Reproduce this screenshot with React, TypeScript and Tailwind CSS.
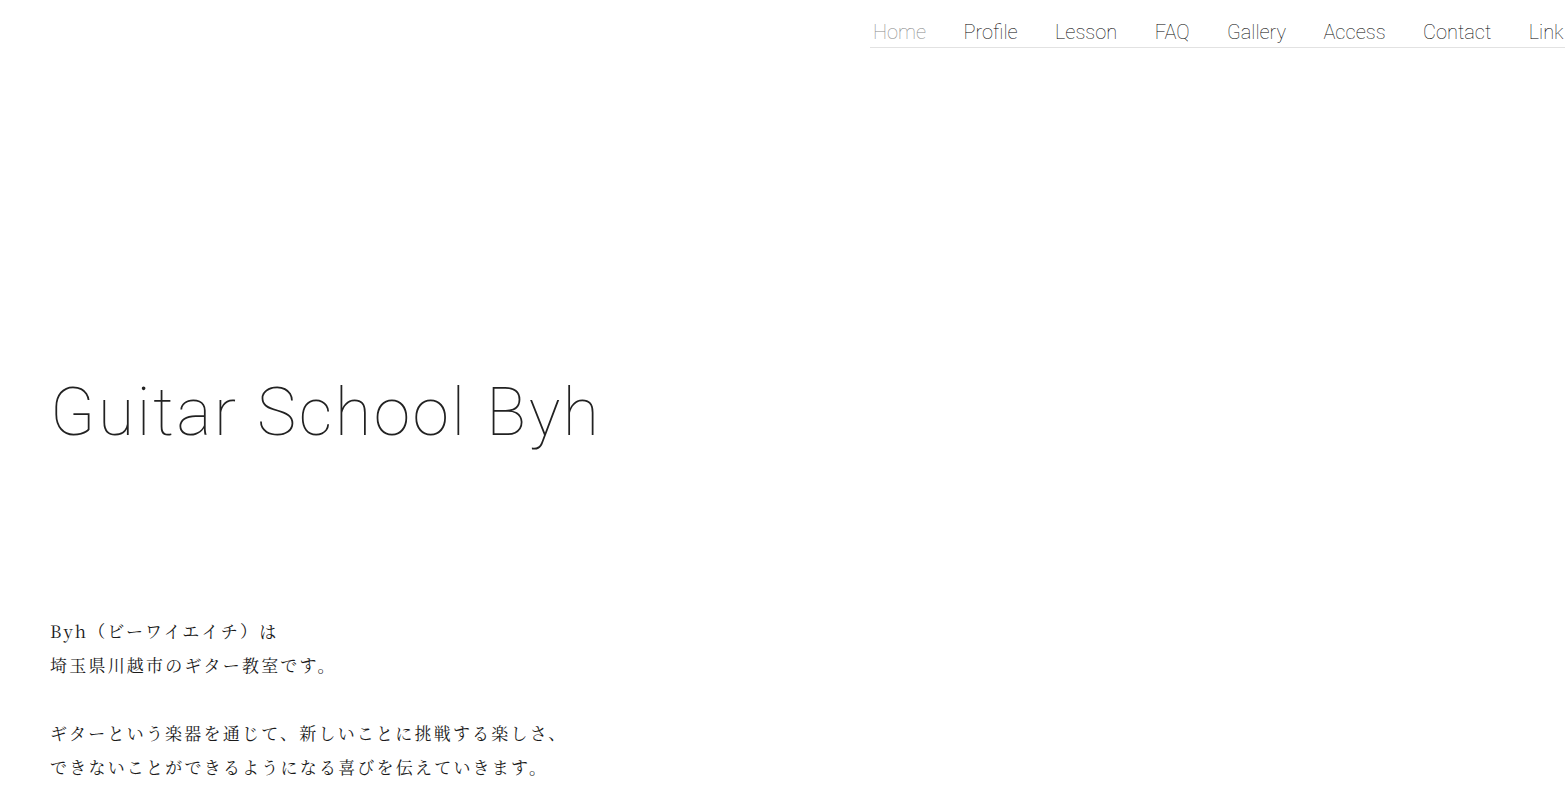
import React from "react";

const navItems = ["Home", "Profile", "Lesson", "FAQ", "Gallery", "Access", "Contact", "Link"];

export default function App() {
  return (
    <div className="w-[1565px] h-[801px] overflow-hidden bg-white text-[#222]" style={{ fontFamily: "Roboto, 'Noto Sans CJK JP', sans-serif" }}>
      <header className="pl-[870px]">
        <nav className="w-[760px] border-b border-[#e2e2e2] pt-[20px] pb-[2px]">
          <ul className="flex gap-[37.4px] pl-[3px] whitespace-nowrap">
            {navItems.map((n, i) => (
              <li
                key={n}
                className={`text-[20px] leading-[25px] font-thin ${i === 0 ? "text-[#888]" : "text-black"}`}
              >
                {n}
              </li>
            ))}
          </ul>
        </nav>
      </header>
      <main className="pl-[50px]">
        <h1 className="mt-[325px] text-[66px] leading-[80px] font-thin tracking-[0.04em] text-[#222]">Guitar School Byh</h1>
        <div
          className="mt-[161px] text-[17px] leading-[34px] tracking-[0.13em] text-[#1a1a1a]"
          style={{ fontFamily: "'Noto Serif CJK JP', 'Noto Sans CJK JP', serif" }}
        >
          <p>Byh（ビーワイエイチ）は</p>
          <p>埼玉県川越市のギター教室です。</p>
          <p className="mt-[34px]">ギターという楽器を通じて、新しいことに挑戦する楽しさ、</p>
          <p>できないことができるようになる喜びを伝えていきます。</p>
        </div>
      </main>
    </div>
  );
}
